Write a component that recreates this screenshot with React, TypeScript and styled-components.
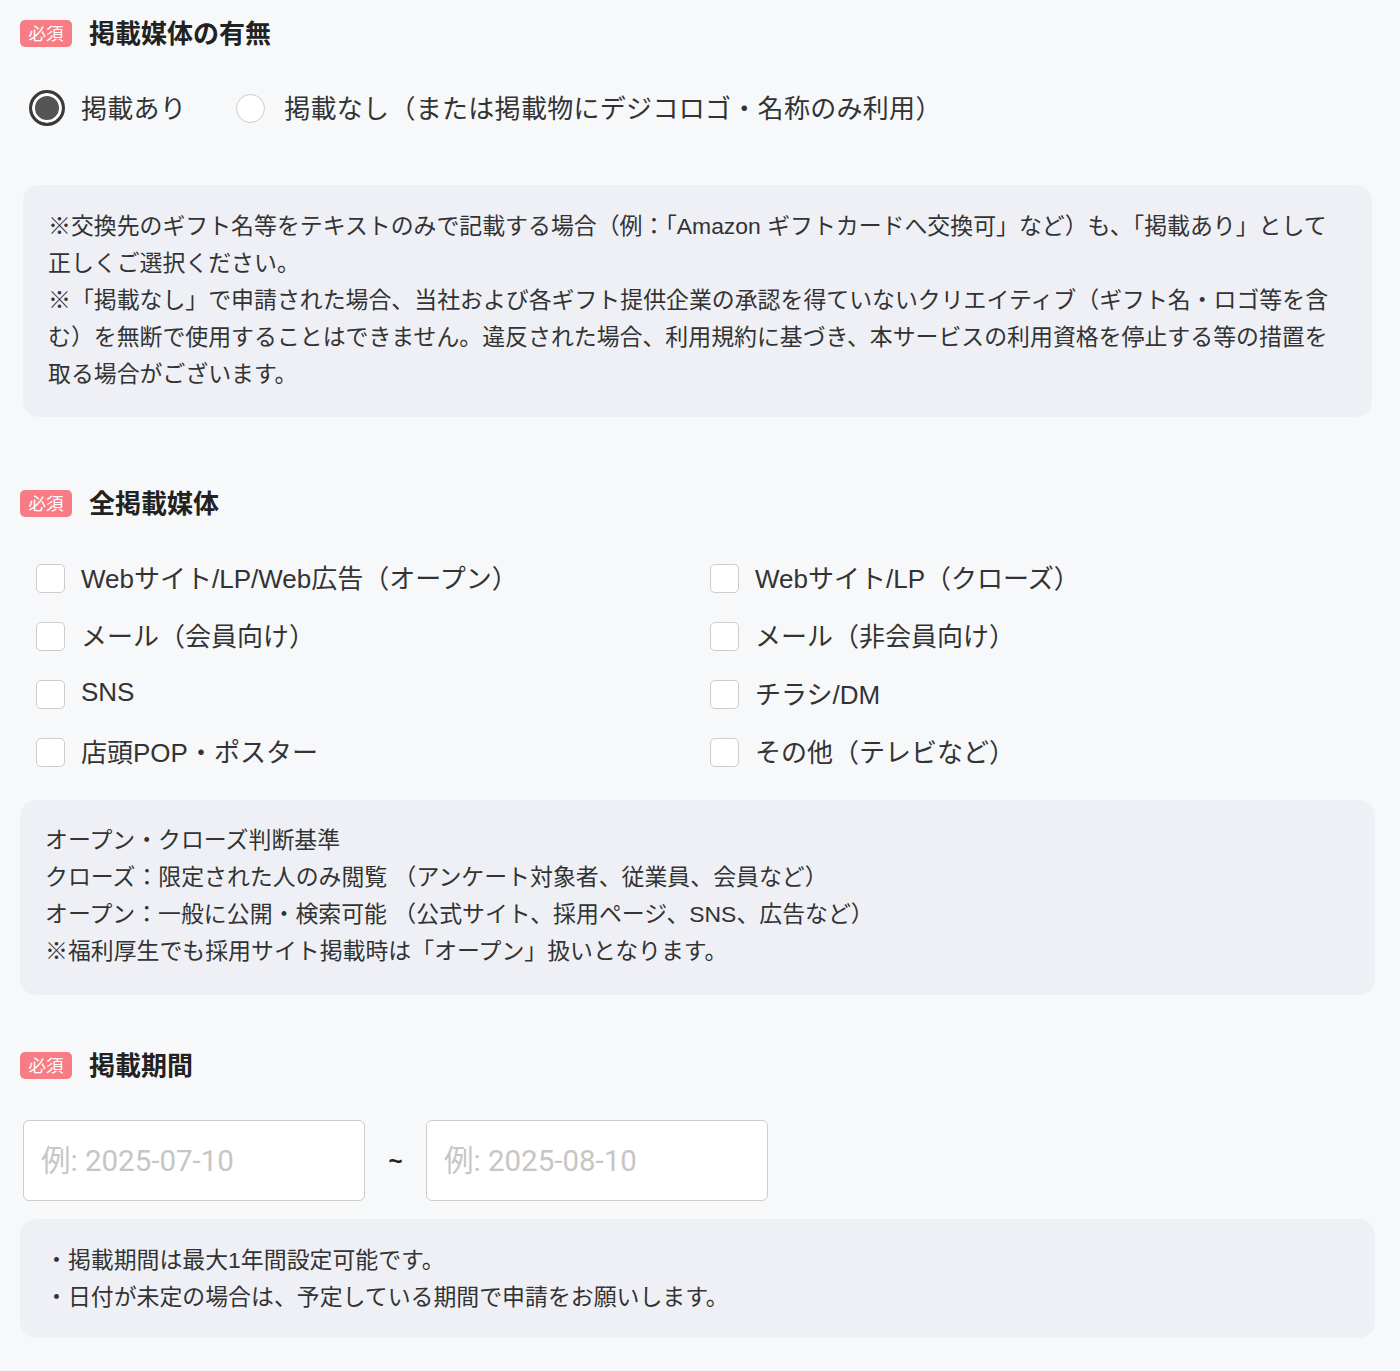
import React, {useState, FC} from 'react';
import styled, {createGlobalStyle} from 'styled-components';

const GlobalStyle = createGlobalStyle`
  html, body {
    margin: 0;
    padding: 0;
    background: #f7f8fa;
  }
  body {
    font-family: "Liberation Sans", "Noto Sans CJK JP", sans-serif;
    color: #333;
  }
  * { box-sizing: border-box; }
`;

const StyledPage = styled.div`
  padding: 20px 25px 31px 20px;
`;

const StyledHeader = styled.div<{$top?: number}>`
  display: flex;
  align-items: center;
  height: 27px;
  margin-top: ${p => p.$top ?? 0}px;
`;

const StyledBadge = styled.span`
  display: inline-flex;
  align-items: center;
  justify-content: center;
  width: 52px;
  height: 27px;
  border-radius: 5px;
  background: #f77c86;
  color: #fff;
  font-size: 17.5px;
  font-family: "Noto Sans CJK JP", sans-serif;
  line-height: 1;
  padding-bottom: 2px;
  margin-right: 17px;
`;

const StyledTitle = styled.h2`
  margin: -4px 0 0;
  font-size: 26px;
  line-height: 30px;
  font-weight: 700;
  color: #222;
  font-family: "Noto Sans CJK JP", sans-serif;
`;

const StyledRadioRow = styled.div`
  display: flex;
  align-items: center;
  gap: 46px;
  margin-top: 43px;
  padding-left: 9px;
  height: 36px;
`;

const StyledRadioItem = styled.label`
  display: flex;
  align-items: center;
  gap: 16px;
  cursor: pointer;
  font-size: 26px;
  color: #333;
  letter-spacing: 0.3px;
`;

const StyledLabelText = styled.span`
  padding-bottom: 4px;
`;

const StyledRadioSlot = styled.span`
  width: 36px;
  height: 36px;
  display: flex;
  align-items: center;
  justify-content: center;
`;

const StyledRadio = styled.span<{$checked: boolean}>`
  display: block;
  border-radius: 50%;
  ${p => p.$checked ? `
    width: 36px;
    height: 36px;
    border: 3px solid #3a3a3a;
    background: #555;
    box-shadow: inset 0 0 0 3px #fff;
  ` : `
    width: 29px;
    height: 29px;
    border: 1.5px solid #ccc;
    background: #fff;
  `}
`;

const StyledNote = styled.div<{$top: number; $inset?: number; $pad?: string}>`
  margin: ${p => p.$top}px ${p => p.$inset ?? 0}px 0;
  padding: ${p => p.$pad ?? '23px 25px'};
  background: #eff0f5;
  border-radius: 16px;
  font-size: 22.9px;
  line-height: 37px;
  color: #333;
  white-space: nowrap;
  > span { display: block; }
`;

const StyledCheckGrid = styled.div`
  display: grid;
  grid-template-columns: 674px 1fr;
  grid-auto-rows: 58px;
  margin-top: 32px;
  padding-left: 16px;
`;

const StyledCheckItem = styled.label`
  display: flex;
  align-items: center;
  gap: 16px;
  font-size: 26px;
  color: #333;
  cursor: pointer;
`;

const StyledCheckbox = styled.span<{$checked: boolean}>`
  width: 29px;
  height: 29px;
  border: 1.5px solid #ccc;
  border-radius: 5px;
  background: ${p => p.$checked ? '#555' : '#fff'};
  flex-shrink: 0;
`;

const StyledDateRow = styled.div`
  display: flex;
  align-items: center;
  margin-top: 41px;
  padding-left: 3px;
`;

const StyledInput = styled.input`
  width: 342px;
  height: 81px;
  border: 1.5px solid #ccc;
  border-radius: 6px;
  background: #fff;
  padding: 0 17px;
  font-size: 29.5px;
  font-family: Roboto, "Noto Sans CJK JP", sans-serif;
  color: #333;
  outline: none;
  &::placeholder { color: #c6c6c6; }
`;

const StyledTilde = styled.span`
  width: 61px;
  text-align: center;
  font-size: 24px;
  font-weight: 700;
  color: #222;
`;

const mediaList = [
  'Webサイト/LP/Web広告（オープン）',
  'Webサイト/LP（クローズ）',
  'メール（会員向け）',
  'メール（非会員向け）',
  'SNS',
  'チラシ/DM',
  '店頭POP・ポスター',
  'その他（テレビなど）',
];

const Header: FC<{title: string; top?: number}> = ({title, top}) => (
  <StyledHeader $top={top}>
    <StyledBadge>必須</StyledBadge>
    <StyledTitle>{title}</StyledTitle>
  </StyledHeader>
);

const App: FC = () => {
  const [posted, setPosted] = useState(true);
  const [checked, setChecked] = useState<string[]>([]);

  const toggle = (item: string) => {
    setChecked(list => list.indexOf(item) >= 0 ? list.filter(i => i !== item) : [...list, item]);
  };

  return (
    <StyledPage>
      <GlobalStyle/>
      <Header title="掲載媒体の有無"/>
      <StyledRadioRow>
        <StyledRadioItem onClick={() => setPosted(true)}>
          <StyledRadioSlot><StyledRadio $checked={posted}/></StyledRadioSlot>
          <StyledLabelText>掲載あり</StyledLabelText>
        </StyledRadioItem>
        <StyledRadioItem onClick={() => setPosted(false)}>
          <StyledRadioSlot><StyledRadio $checked={!posted}/></StyledRadioSlot>
          <StyledLabelText>掲載なし（または掲載物にデジコロゴ・名称のみ利用）</StyledLabelText>
        </StyledRadioItem>
      </StyledRadioRow>
      <StyledNote $top={59} $inset={3} $pad="23px 25px 24px">
        <span>※交換先のギフト名等をテキストのみで記載する場合（例：「Amazon ギフトカードへ交換可」など）も、「掲載あり」として</span>
        <span>正しくご選択ください。</span>
        <span>※「掲載なし」で申請された場合、当社および各ギフト提供企業の承認を得ていないクリエイティブ（ギフト名・ロゴ等を含</span>
        <span>む）を無断で使用することはできません。違反された場合、利用規約に基づき、本サービスの利用資格を停止する等の措置を</span>
        <span>取る場合がございます。</span>
      </StyledNote>

      <Header title="全掲載媒体" top={73}/>
      <StyledCheckGrid>
        {mediaList.map(item => (
          <StyledCheckItem key={item} onClick={() => toggle(item)}>
            <StyledCheckbox $checked={checked.indexOf(item) >= 0}/>
            <StyledLabelText>{item}</StyledLabelText>
          </StyledCheckItem>
        ))}
      </StyledCheckGrid>
      <StyledNote $top={19} $pad="22px 25px 25px">
        <span>オープン・クローズ判断基準</span>
        <span>クローズ：限定された人のみ閲覧 （アンケート対象者、従業員、会員など）</span>
        <span>オープン：一般に公開・検索可能 （公式サイト、採用ページ、SNS、広告など）</span>
        <span>※福利厚生でも採用サイト掲載時は「オープン」扱いとなります。</span>
      </StyledNote>

      <Header title="掲載期間" top={57}/>
      <StyledDateRow>
        <StyledInput placeholder="例: 2025-07-10"/>
        <StyledTilde>~</StyledTilde>
        <StyledInput placeholder="例: 2025-08-10"/>
      </StyledDateRow>
      <StyledNote $top={18} $pad="23px 25px 22px">
        <span>・掲載期間は最大1年間設定可能です。</span>
        <span>・日付が未定の場合は、予定している期間で申請をお願いします。</span>
      </StyledNote>
    </StyledPage>
  );
};

export default App;
